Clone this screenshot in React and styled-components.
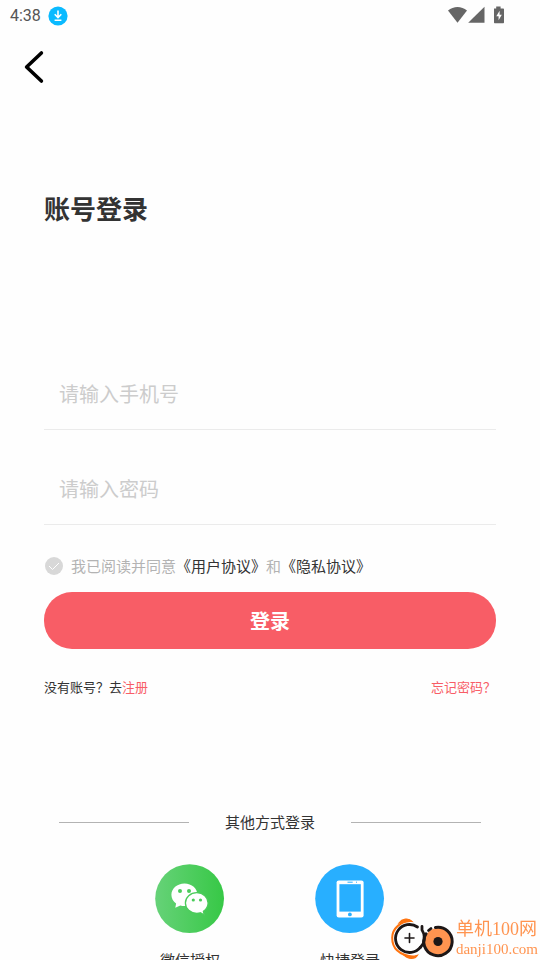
import React, { useState } from "react";
import styled, { createGlobalStyle } from "styled-components";

const GlobalStyle = createGlobalStyle`
  * {
    box-sizing: border-box;
  }

  body {
    margin: 0;
    background-color: #fefefe;
    color: #333;
    font-family: "Noto Sans CJK SC", sans-serif;
  }
`;

const Page = styled.div`
  height: 100vh;
  overflow-y: auto;
  scrollbar-width: none;
`;

const StatusBar = styled.div`
  height: 32px;
  padding: 0 36px 0 10px;
  display: flex;
  align-items: center;
  justify-content: space-between;
`;

const StatusGroup = styled.div`
  display: flex;
  align-items: center;
  gap: 7px;
`;

const Time = styled.span`
  font: 400 16px/20px Roboto, sans-serif;
  color: #555;
`;

const Header = styled.header`
  height: 70px;
  padding: 0 24px;
  display: flex;
  align-items: center;
`;

const BackButton = styled.button`
  display: flex;
  padding: 0;
  border: none;
  background-color: transparent;
  cursor: pointer;
`;

const Wrapper = styled.main`
  padding: 87px 44px 16px;
`;

const Title = styled.h1`
  margin: 0;
  font-size: 26px;
  line-height: 38px;
  font-weight: 700;
`;

const Form = styled.form`
  margin-top: 131px;
`;

const Field = styled.input`
  display: block;
  width: 100%;
  height: 72px;
  margin-bottom: 23px;
  padding: 0 15px;
  border: none;
  border-bottom: 1px solid #ebebeb;
  border-radius: 0;
  outline: none;
  background-color: transparent;
  color: #333;
  font: 400 20px/30px "Noto Sans CJK SC", sans-serif;

  &::placeholder {
    color: #ccc;
    opacity: 1;
  }
`;

const Terms = styled.div`
  display: flex;
  align-items: center;
  gap: 8px;
  margin: 29px 0 14px;
  font-size: 15px;
  line-height: 24px;
  color: #b3b3b3;
`;

const CheckBox = styled.span`
  display: grid;
  margin-left: 1px;

  > * {
    grid-area: 1 / 1;
  }

  svg {
    pointer-events: none;
  }
`;

const Check = styled.input`
  appearance: none;
  width: 18px;
  height: 18px;
  margin: 0;
  border-radius: 50%;
  background-color: #d8d8d8;
  cursor: pointer;

  &:checked {
    background-color: #f85d66;
  }
`;

const TextLink = styled.a`
  color: ${(props) => (props.$accent ? "#f85d66" : "#333")};
  text-decoration: none;
`;

const SubmitButton = styled.button`
  display: block;
  width: 100%;
  height: 57px;
  border: none;
  border-radius: 28px;
  background-color: #f85d66;
  color: white;
  font: 700 20px/30px "Noto Sans CJK SC", sans-serif;
  cursor: pointer;
`;

const Links = styled.div`
  display: flex;
  justify-content: space-between;
  margin-top: 28px;
  font-size: 13px;
  line-height: 20px;
`;

const Divider = styled.div`
  display: flex;
  align-items: center;
  gap: 36px;
  margin-top: 113px;
  padding: 0 15px;
  font-size: 15px;
  line-height: 24px;

  &::before,
  &::after {
    content: "";
    flex: 1;
    height: 1px;
    background-color: #b3b3b3;
  }
`;

const Methods = styled.div`
  display: flex;
  justify-content: center;
  gap: 90px;
  margin-top: 30px;
`;

const Method = styled.button`
  display: flex;
  flex-direction: column;
  align-items: center;
  gap: 14px;
  width: 70px;
  padding: 0;
  border: none;
  background-color: transparent;
  color: #333;
  font: 400 15px/24px "Noto Sans CJK SC", sans-serif;
  cursor: pointer;
`;

const Watermark = styled.div`
  position: fixed;
  right: 2px;
  bottom: 0;
  display: flex;
  align-items: center;
  gap: 2px;
  pointer-events: none;
`;

const WatermarkText = styled.div`
  display: flex;
  flex-direction: column;
  color: #ff9450;
  font-family: "Liberation Serif", "Noto Sans CJK SC", serif;
`;

const SiteName = styled.span`
  font-size: 18px;
  line-height: 21px;
`;

const SiteUrl = styled.span`
  font-size: 15px;
  line-height: 18px;
`;

const DownloadIcon = () => (
  <svg width="20" height="20" viewBox="0 0 20 20">
    <circle cx="10" cy="10" r="9.6" fill="#0abaff" />
    <path
      d="M10 4.500v6.600M6.700 8.200l3.300 3.300 3.300-3.300M6.600 14.200h6.800"
      fill="none"
      stroke="white"
      strokeWidth="1.600"
    />
  </svg>
);

const SignalIcons = () => (
  <svg width="56" height="20" viewBox="0 0 56 20">
    <g fill="#666">
      <path d="M9.500 16.800L0 4.600C5.500-.2 13.500-.2 19 4.600z" />
      <path d="M36.500 .8v16H20.200z" />
      <path d="M46 2.400h2.200V.4h4.400v2H55c.6 0 1 .4 1 1v12.800c0 .6-.4 1-1 1h-8c-.6 0-1-.4-1-1z" />
    </g>
    <path d="M51.600 4.800L48.300 10.200h2.300v4l3.200-5.500h-2.200z" fill="white" />
  </svg>
);

const BackIcon = () => (
  <svg width="20" height="34" viewBox="0 0 20 34">
    <path
      d="M17.400 3L2.600 17l14.800 14"
      fill="none"
      stroke="black"
      strokeWidth="3.600"
      strokeLinecap="round"
      strokeLinejoin="round"
    />
  </svg>
);

const WechatIcon = () => (
  <svg width="70" height="70" viewBox="0 0 70 70">
    <defs>
      <linearGradient id="wechat">
        <stop offset="0" stopColor="#66d278" />
        <stop offset="1" stopColor="#37c846" />
      </linearGradient>
    </defs>
    <circle cx="34.600" cy="34.600" r="34.400" fill="url(#wechat)" />
    <path
      d="M29.500 19.400C22.100 19.400 16.400 24.400 16.400 30.800c0 3.600 1.800 6.600 4.700 8.700L20.300 43.800l5-2.400c1.400.4 2.700.6 4.200.6 7.300 0 13-5 13-11.200S36.800 19.400 29.500 19.400z"
      fill="white"
    />
    <path
      d="M41.800 28.700c-6.400 0-11.400 4.600-11.400 10.300s5 10.300 11.400 10.300c1.300 0 2.500-.2 3.600-.5l4 2.200-1-3.600c2.700-1.900 4.700-4.900 4.700-8.400 0-5.700-5-10.300-11.300-10.300z"
      fill="white"
      stroke="#4bcc5b"
      strokeWidth="1.300"
    />
    <g fill="#4bcc5b">
      <circle cx="25" cy="27" r="2" />
      <circle cx="34" cy="27" r="2" />
      <circle cx="38.300" cy="36" r="1.600" />
      <circle cx="45.500" cy="36" r="1.600" />
    </g>
  </svg>
);

const PhoneIcon = () => (
  <svg width="70" height="70" viewBox="0 0 70 70">
    <circle cx="34.600" cy="34.600" r="34.400" fill="#28afff" />
    <rect x="21.600" y="16.400" width="27" height="37" rx="2.200" fill="white" />
    <rect x="24.400" y="20.200" width="21.400" height="27.400" fill="#28afff" />
    <path d="M32.500 18.200h5.200M41 18.200h1" stroke="#28afff" strokeWidth="1" />
    <circle cx="34.900" cy="50.400" r="1.900" fill="#28afff" />
  </svg>
);

const WatermarkLogo = () => (
  <svg width="64" height="44" viewBox="0 0 64 44">
    <g fill="none" strokeLinecap="round">
      <path
        d="M20 5C11 5.500 2.500 12 2.200 21.500C2 31 8 39 24 41"
        stroke="#ff7410"
        strokeWidth="2"
      />
      <path
        d="M9 7C12 2.800 18.500 1.600 22 5.400C18 4.600 13.500 5.500 9 7zM14 39.200c4 4.200 11 4.400 13.500 0C23 40.800 18.500 40.500 14 39.200z"
        fill="#ff7410"
        stroke="#ff7410"
        strokeWidth="1.200"
      />
      <circle cx="48" cy="25.500" r="13.500" fill="#ff9450" />
      <path
        d="M27.500 11A14 14 0 1 0 30.500 31.200"
        stroke="#1d1717"
        strokeWidth="2.800"
      />
      <path
        d="M32 10.500V14C35.500 19 35.500 26 30.500 31.200M38.500 14.500l2.500-2"
        stroke="#1d1717"
        strokeWidth="2.800"
        strokeLinejoin="round"
      />
      <path
        d="M45.500 11.500A14.200 14.200 0 1 1 36 17.800"
        stroke="#1d1717"
        strokeWidth="3"
      />
      <path d="M19.500 17.500v9M15 22h9" stroke="#1d1717" strokeWidth="1.600" />
    </g>
    <circle cx="48" cy="25.500" r="4.600" fill="#1d1717" />
  </svg>
);

function App() {
  const [agreed, setAgreed] = useState(false);

  return (
    <Page>
      <GlobalStyle />
      <StatusBar>
        <StatusGroup>
          <Time>4:38</Time>
          <DownloadIcon />
        </StatusGroup>
        <SignalIcons />
      </StatusBar>
      <Header>
        <BackButton aria-label="返回">
          <BackIcon />
        </BackButton>
      </Header>
      <Wrapper>
        <Title>账号登录</Title>
        <Form onSubmit={(e) => e.preventDefault()}>
          <Field type="tel" placeholder="请输入手机号" aria-label="手机号" />
          <Field type="password" placeholder="请输入密码" aria-label="密码" />
          <Terms>
            <CheckBox>
              <Check
                type="checkbox"
                id="agree"
                checked={agreed}
                onChange={(e) => setAgreed(e.target.checked)}
              />
              <svg width="18" height="18" viewBox="0 0 18 18">
                <path
                  d="M4 9l3.500 3.500L14 6"
                  fill="none"
                  stroke="white"
                  strokeWidth="1"
                />
              </svg>
            </CheckBox>
            <span>
              <label htmlFor="agree">我已阅读并同意</label>
              <TextLink href="#user">《用户协议》</TextLink>和
              <TextLink href="#privacy">《隐私协议》</TextLink>
            </span>
          </Terms>
          <SubmitButton type="submit">登录</SubmitButton>
        </Form>
        <Links>
          <span>
            没有账号？去
            <TextLink href="#register" $accent>
              注册
            </TextLink>
          </span>
          <TextLink href="#forgot" $accent>
            忘记密码？
          </TextLink>
        </Links>
        <Divider>其他方式登录</Divider>
        <Methods>
          <Method>
            <WechatIcon />
            微信授权
          </Method>
          <Method>
            <PhoneIcon />
            快捷登录
          </Method>
        </Methods>
      </Wrapper>
      <Watermark>
        <WatermarkLogo />
        <WatermarkText>
          <SiteName>单机100网</SiteName>
          <SiteUrl>danji100.com</SiteUrl>
        </WatermarkText>
      </Watermark>
    </Page>
  );
}

export default App;
